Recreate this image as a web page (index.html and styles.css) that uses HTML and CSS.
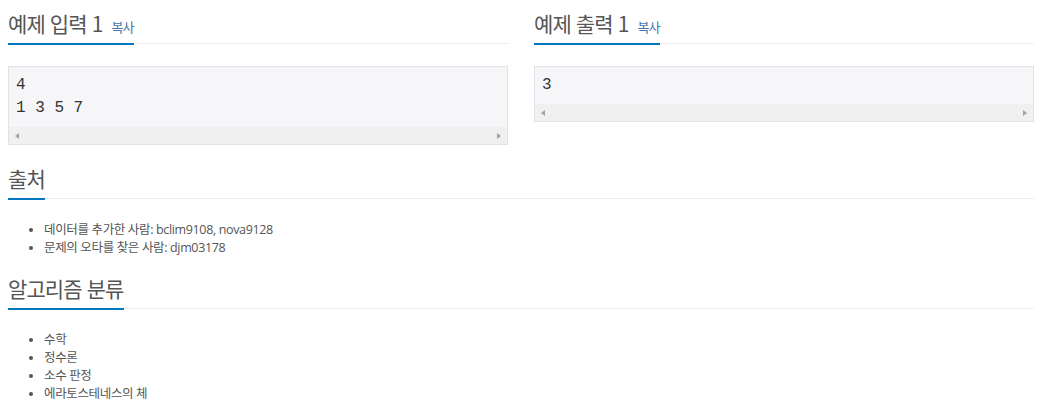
FILE: index.html
```html
<!DOCTYPE html>
<html lang="ko">
<head>
<meta charset="utf-8">
<title>예제</title>
<link rel="stylesheet" href="styles.css">
</head>
<body>
<div class="page">
  <div class="samples">
    <section class="sample-col">
      <div class="headline">
        <h2>예제 입력 1 <button class="copy-button" type="button">복사</button></h2>
      </div>
      <div class="sampledata">
        <pre class="sample-text">4
1 3 5 7</pre>
        <div class="hscroll"><span class="arrow arrow-left"></span><span class="arrow arrow-right"></span></div>
      </div>
    </section>
    <section class="sample-col">
      <div class="headline">
        <h2>예제 출력 1 <button class="copy-button" type="button">복사</button></h2>
      </div>
      <div class="sampledata">
        <pre class="sample-text">3</pre>
        <div class="hscroll"><span class="arrow arrow-left"></span><span class="arrow arrow-right"></span></div>
      </div>
    </section>
  </div>

  <section class="block block-source">
    <div class="headline">
      <h2>출처</h2>
    </div>
    <ul class="info-list">
      <li>데이터를 추가한 사람: bclim9108, nova9128</li>
      <li>문제의 오타를 찾은 사람: djm03178</li>
    </ul>
  </section>

  <section class="block block-tags">
    <div class="headline">
      <h2>알고리즘 분류</h2>
    </div>
    <ul class="info-list">
      <li>수학</li>
      <li>정수론</li>
      <li>소수 판정</li>
      <li>에라토스테네스의 체</li>
    </ul>
  </section>
</div>
</body>
</html>
```

FILE: styles.css
```css
html, body {
  margin: 0;
  padding: 0;
  background: #fff;
}

body {
  font-family: "Open Sans", "Noto Sans CJK KR", sans-serif;
  font-size: 13px;
  color: #555;
}

.page {
  width: 1026px;
  padding: 10px 8px 0;
}

.samples {
  display: grid;
  grid-template-columns: 500px 500px;
  column-gap: 26px;
}

.headline {
  display: block;
  border-bottom: 1px dotted #dcdcdc;
  margin: 0 0 22px;
}

.headline h2 {
  display: inline-block;
  margin: 0 0 -2px;
  padding-bottom: 6px;
  border-bottom: 2px solid #0076c0;
  font-family: "Noto Sans CJK KR", "Open Sans", sans-serif;
  font-size: 21px;
  line-height: 27px;
  font-weight: normal;
  letter-spacing: -0.9px;
  color: #555;
}

.copy-button {
  border: 0;
  background: none;
  padding: 0 0 0 4px;
  margin: 0;
  font-family: "Noto Sans CJK KR", sans-serif;
  font-size: 13px;
  letter-spacing: -0.8px;
  color: #4a76b0;
  vertical-align: baseline;
  cursor: pointer;
}

.sampledata {
  border: 1px solid #e1e1e8;
  background: #f6f6f8;
}

.sample-text {
  margin: 0;
  padding: 7px 7px;
  font-family: "Liberation Mono", monospace;
  font-size: 16px;
  line-height: 23px;
  color: #333;
  white-space: pre;
}

.hscroll {
  height: 17px;
  background: #f0f0f0;
  display: flex;
  align-items: center;
  justify-content: space-between;
  padding: 0 6px 0 6px;
}

.arrow {
  width: 0;
  height: 0;
  border-top: 3.5px solid transparent;
  border-bottom: 3.5px solid transparent;
}

.arrow-left {
  border-right: 4px solid #a3a3a3;
}

.arrow-right {
  border-left: 4px solid #a3a3a3;
}

.block-source {
  margin-top: 20px;
}

.block-tags {
  margin-top: 18px;
}

.info-list {
  margin: 0;
  padding-left: 36px;
  font-size: 12.5px;
  letter-spacing: -0.35px;
  line-height: 18px;
}
```
